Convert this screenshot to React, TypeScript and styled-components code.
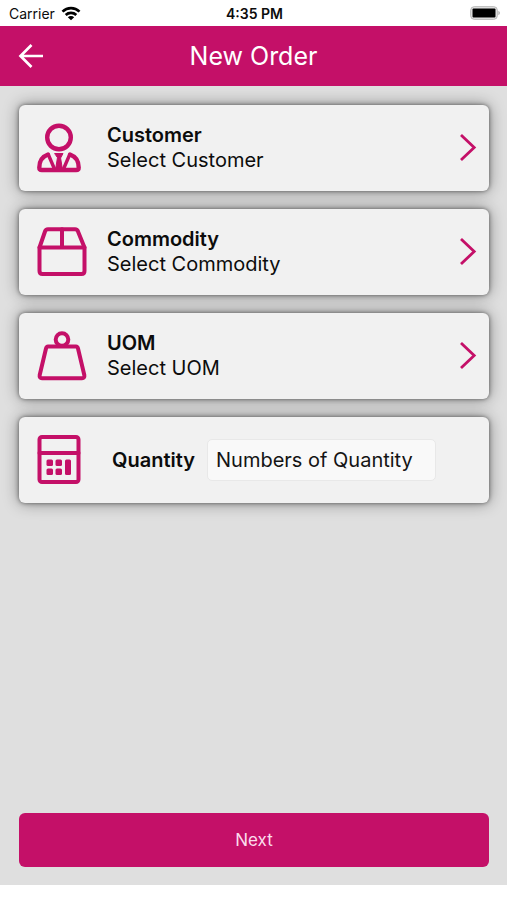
import React from "react";
import styled, { createGlobalStyle } from "styled-components";

const PINK = "#c41068";

const GlobalStyle = createGlobalStyle`
  *, *::before, *::after { box-sizing: border-box; }
  body {
    margin: 0;
    background: #fff;
    color: #0c0c0c;
    font-family: Inter, "Liberation Sans", sans-serif;
  }
  button, input { font: inherit; color: inherit; }
`;

const Screen = styled.div`
  display: flex;
  flex-direction: column;
  min-height: 100vh;
  padding-bottom: 15px;
`;

const StatusBar = styled.div`
  display: grid;
  grid-template-columns: 1fr auto 1fr;
  align-items: center;
  height: 26px;
  padding: 1px 7px 0 9px;
  font-size: 14px;
  line-height: 20px;
`;

const Carrier = styled.span`
  display: flex;
  align-items: center;
  gap: 6px;
`;

const Clock = styled.span`
  font-size: 14px;
  font-weight: 600;
`;

const BatteryIcon = styled.svg`
  justify-self: end;
`;

const Header = styled.header`
  display: grid;
  grid-template-columns: 1fr auto 1fr;
  align-items: center;
  height: 60px;
  padding: 0 18px;
  background: ${PINK};
  color: #fff;
`;

const Title = styled.h1`
  margin: 0;
  font-size: 25px;
  font-weight: 400;
  line-height: 32px;
`;

const BackButton = styled.button`
  display: flex;
  justify-self: start;
  padding: 0;
  border: 0;
  background: none;
  cursor: pointer;
`;

const Content = styled.main`
  display: flex;
  flex: 1;
  flex-direction: column;
  gap: 18px;
  padding: 19px 18px 18px 19px;
  background: #dfdfdf;
`;

const Card = styled.div`
  display: flex;
  align-items: center;
  width: 100%;
  min-height: 86px;
  padding: 18px 12px 18px 18px;
  border: 0;
  border-radius: 6px;
  background: #f1f1f1;
  box-shadow: 0 0 4px rgba(0, 0, 0, 0.5), 0 0 16px rgba(0, 0, 0, 0.42);
  text-align: left;
`;

const CardIcon = styled.svg`
  flex: none;
  width: 50px;
  height: 50px;
  margin-right: 20px;
  fill: none;
  stroke: ${PINK};
  stroke-width: 4;
  stroke-linejoin: round;
  stroke-linecap: round;
`;

const CardText = styled.span`
  display: flex;
  flex: 1;
  flex-direction: column;
  font-size: 20px;
  line-height: 25px;
`;

const CardTitle = styled.span`
  font-weight: 600;
`;

const QuantityLabel = styled.label`
  padding: 0 12px 0 5px;
  font-size: 20px;
  font-weight: 600;
  line-height: 25px;
`;

const QuantityInput = styled.input`
  flex: 1;
  min-width: 0;
  height: 42px;
  margin-right: 41px;
  padding: 0 8px;
  border: 1px solid #e8e8e8;
  border-radius: 5px;
  background: #f9f9f9;
  font-size: 20px;
  &::placeholder {
    color: #141414;
    opacity: 1;
  }
`;

const NextButton = styled.button`
  height: 54px;
  margin-top: auto;
  border: 0;
  border-radius: 6px;
  background: ${PINK};
  color: #fbdcec;
  font-size: 17px;
  cursor: pointer;
`;

const CustomerGlyph = () => (
  <CardIcon viewBox="0 0 50 50" aria-hidden="true">
    <circle cx="22" cy="14.500" r="11.800" strokeWidth="4.400" />
    <path d="M11 31.500C5.500 33.500 2.300 38 2.300 44.500Q2.300 47 4.800 47H39.200Q41.700 47 41.700 44.500C41.700 38 38.500 33.500 33 31.500" strokeWidth="4.400" />
    <path d="M11.500 32L17.500 46M32.500 32L26.500 46" strokeWidth="3.400" />
    <path d="M18 30.500H26L23.600 35L25.500 47H18.500L20.400 35Z" fill={PINK} strokeWidth="1" />
  </CardIcon>
);

const BoxGlyph = () => (
  <CardIcon viewBox="0 0 50 50" aria-hidden="true">
    <path d="M2.500 20.500L8 4.500Q8.700 2.300 11 2.300H38Q40.300 2.300 41 4.500L47.500 20.500V44Q47.500 47 44.500 47H5.500Q2.500 47 2.500 44Z" />
    <path d="M2.500 20.500H47.500M25 2.300V20.500" />
  </CardIcon>
);

const WeightGlyph = () => (
  <CardIcon viewBox="0 0 50 50" aria-hidden="true">
    <circle cx="25" cy="8.500" r="6.300" />
    <path d="M11 15.500H39Q40.500 15.500 41 17.500L47.300 44Q47.800 47.300 45 47.300H5Q2.200 47.300 2.700 44L9 17.500Q9.500 15.500 11 15.500Z" />
  </CardIcon>
);

const CalculatorGlyph = () => (
  <CardIcon viewBox="0 0 50 50" aria-hidden="true">
    <rect x="2.500" y="2" width="39" height="45" rx="2.500" />
    <path d="M2.500 18H41.500" />
    <g fill={PINK} stroke="none">
      <rect x="9.500" y="24.500" width="6.500" height="6.500" rx="1.500" />
      <rect x="18.500" y="24.500" width="6.500" height="6.500" rx="1.500" />
      <rect x="9.500" y="33.500" width="6.500" height="6.500" rx="1.500" />
      <rect x="18.500" y="33.500" width="6.500" height="6.500" rx="1.500" />
      <rect x="28" y="24.500" width="6" height="15.500" rx="1.500" />
    </g>
  </CardIcon>
);

const Chevron = () => (
  <svg width="18" height="28" viewBox="0 0 18 28" fill="none" stroke={PINK} strokeWidth="2.800" aria-hidden="true">
    <path d="M2 1L15.200 13.500L2 26" />
  </svg>
);

const selectors = [
  { title: "Customer", prompt: "Select Customer", Glyph: CustomerGlyph },
  { title: "Commodity", prompt: "Select Commodity", Glyph: BoxGlyph },
  { title: "UOM", prompt: "Select UOM", Glyph: WeightGlyph },
];

export default function App() {
  return (
    <>
      <GlobalStyle />
      <Screen>
        <StatusBar>
          <Carrier>
            Carrier
            <svg width="20" height="15" viewBox="0 0 20 15" fill="none" stroke="#000" strokeWidth="2.700" aria-label="Wi-Fi">
              <path d="M1.500 5.600C6.300 .9 13.700 .9 18.500 5.600" />
              <path d="M4.700 9C7.700 6.200 12.300 6.200 15.300 9" />
              <path d="M10 14.300L6.800 11.200C8.500 9.600 11.500 9.600 13.200 11.200Z" fill="#000" stroke="none" />
            </svg>
          </Carrier>
          <Clock>4:35 PM</Clock>
          <BatteryIcon width="30" height="15" viewBox="0 0 30 15" aria-label="Battery full">
            <rect x=".7" y=".7" width="26.600" height="12.600" rx="3.500" fill="#e6e6e6" stroke="#b5b5b5" />
            <rect x="2.500" y="2.500" width="23" height="9" rx="1" fill="#000" />
            <path d="M28.300 4.700Q30 5.500 30 7T28.300 9.300Z" fill="#b5b5b5" />
          </BatteryIcon>
        </StatusBar>
        <Header>
          <BackButton aria-label="Back">
            <svg width="26" height="26" viewBox="0 0 26 26" fill="none" stroke="#fff" strokeWidth="2.700" aria-hidden="true">
              <path d="M13.500 2L2.500 13L13.500 24M2.500 13H25" />
            </svg>
          </BackButton>
          <Title>New Order</Title>
        </Header>
        <Content>
          {selectors.map(({ title, prompt, Glyph }) => (
            <Card as="button" type="button" key={title}>
              <Glyph />
              <CardText>
                <CardTitle>{title}</CardTitle>
                <span>{prompt}</span>
              </CardText>
              <Chevron />
            </Card>
          ))}
          <Card>
            <CalculatorGlyph />
            <QuantityLabel htmlFor="quantity">Quantity</QuantityLabel>
            <QuantityInput id="quantity" inputMode="numeric" placeholder="Numbers of Quantity" />
          </Card>
          <NextButton type="button">Next</NextButton>
        </Content>
      </Screen>
    </>
  );
}
